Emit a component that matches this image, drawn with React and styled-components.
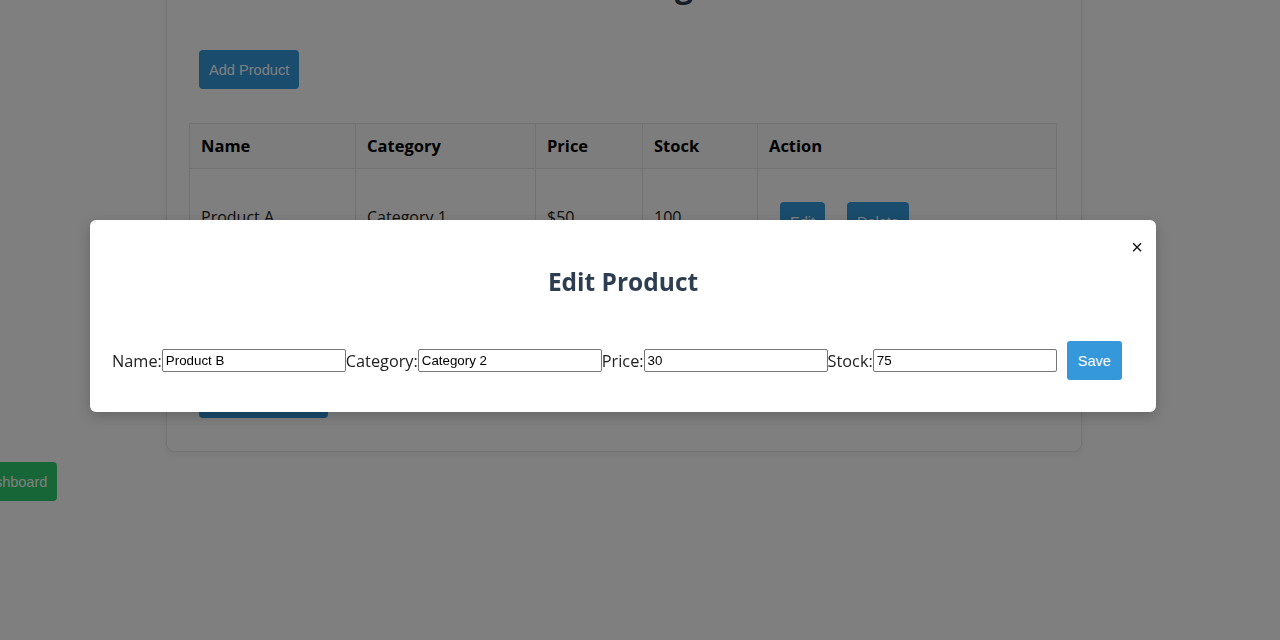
import React from "react";
import styled, { createGlobalStyle } from "styled-components";

const GlobalStyle = createGlobalStyle`
    html, body {
        margin: 0;
        padding: 0;
        background: #fff;
        font-family: "Open Sans", "Noto Sans", sans-serif;
        color: #222;
        overflow: hidden;
    }
`;

const products = [
    { name: "Product A", category: "Category 1", price: "$50", stock: 100 },
    { name: "Product B", category: "Category 2", price: "$30", stock: 75 },
];

function App() {
    return (
        <>
            <GlobalStyle />
            <Page>
                <Card>
                    <Title>Product Management</Title>
                    <Button>Add Product</Button>
                    <Table>
                        <thead>
                            <tr>
                                <Th style={{ width: 143 }}>Name</Th>
                                <Th style={{ width: 157 }}>Category</Th>
                                <Th style={{ width: 84 }}>Price</Th>
                                <Th style={{ width: 92 }}>Stock</Th>
                                <Th>Action</Th>
                            </tr>
                        </thead>
                        <tbody>
                            {products.map((p) => (
                                <tr key={p.name}>
                                    <Td>{p.name}</Td>
                                    <Td>{p.category}</Td>
                                    <Td>{p.price}</Td>
                                    <Td>{p.stock}</Td>
                                    <Td>
                                        <RowButton>Edit</RowButton>
                                        <RowButton>Delete</RowButton>
                                    </Td>
                                </tr>
                            ))}
                        </tbody>
                    </Table>
                    <Button>Generate Report</Button>
                </Card>
            </Page>
            <BackButton>Back to Dashboard</BackButton>

            <Overlay>
                <Modal>
                    <Close>×</Close>
                    <ModalTitle>Edit Product</ModalTitle>
                    <Form>
                        <Label>Name:</Label>
                        <Input defaultValue="Product B" />
                        <Label>Category:</Label>
                        <Input defaultValue="Category 2" />
                        <Label>Price:</Label>
                        <Input defaultValue="30" />
                        <Label>Stock:</Label>
                        <Input defaultValue="75" />
                        <SaveButton>Save</SaveButton>
                    </Form>
                </Modal>
            </Overlay>
        </>
    );
}

export default App;

const Page = styled.div`
    width: 1280px;
    height: 640px;
`;

const Card = styled.div`
    width: 870px;
    margin: -60px 0 0 166px;
    padding: 22px 22px 33px;
    background: #fff;
    border: 1px solid #e6e6e6;
    border-radius: 8px;
    box-shadow: 0 2px 8px rgba(0, 0, 0, 0.06);
`;

const Title = styled.h1`
    margin: 0 0 44px;
    font-size: 32px;
    font-weight: 700;
    text-align: center;
    color: #2c3e50;
    line-height: 43px;
`;

const Button = styled.button`
    display: block;
    height: 39px;
    margin: 0 10px;
    padding: 0 10px;
    border: none;
    border-radius: 4px;
    background: #3498db;
    color: #fff;
    font-family: "Liberation Sans", Arial, sans-serif;
    font-size: 14.6px;
`;

const Table = styled.table`
    width: 868px;
    margin: 34px 0 16px;
    border-collapse: collapse;
    border: 1px solid #e4e4e4;
`;

const Th = styled.th`
    padding: 10px 11px;
    line-height: 24px;
    text-align: left;
    font-size: 16.5px;
    font-weight: 700;
    color: #000;
    border: 1px solid #e4e4e4;
    background: #fafafa;
`;

const Td = styled.td`
    padding: 12px 11px;
    font-size: 16px;
    color: #222;
    vertical-align: middle;
    border: 1px solid #e4e4e4;
`;

const RowButton = styled.button`
    vertical-align: top;
    height: 39px;
    margin: 21px 11px 12px;
    padding: 0 10px;
    border: none;
    border-radius: 4px;
    background: #3498db;
    color: #fff;
    font-family: "Liberation Sans", Arial, sans-serif;
    font-size: 14.5px;
`;

const BackButton = styled.button`
    position: fixed;
    left: -86px;
    top: 462px;
    height: 39px;
    padding: 0 10px;
    border: none;
    border-radius: 4px;
    background: #2ecc71;
    color: #fff;
    font-family: "Liberation Sans", Arial, sans-serif;
    font-size: 14.5px;
`;

const Overlay = styled.div`
    position: fixed;
    inset: 0;
    display: flex;
    align-items: center;
    justify-content: center;
    padding: 0 34px 8px 0;
    background: rgba(0, 0, 0, 0.5);
`;

const Modal = styled.div`
    position: relative;
    box-sizing: border-box;
    width: 1066px;
    padding: 22px 22px 32px;
    background: #fff;
    border-radius: 6px;
    box-shadow: 0 4px 14px rgba(0, 0, 0, 0.2);
`;

const Close = styled.span`
    position: absolute;
    top: 15px;
    right: 13px;
    font-family: "Liberation Sans", Arial, sans-serif;
    font-size: 20px;
    line-height: 24px;
    color: #111;
    cursor: pointer;
`;

const ModalTitle = styled.h2`
    margin: 22px 0 0;
    font-size: 24.5px;
    font-weight: 700;
    line-height: 35px;
    text-align: center;
    color: #2c3e50;
`;

const Form = styled.div`
    display: flex;
    align-items: center;
    margin-top: 42px;
`;

const Label = styled.label`
    font-size: 16.3px;
    color: #222;
`;

const Input = styled.input`
    box-sizing: border-box;
    width: 184px;
    height: 23px;
    padding: 1px 3px;
    border: 1px solid #767676;
    border-radius: 2px;
    font-family: "Liberation Sans", Arial, sans-serif;
    font-size: 13.33px;
    color: #000;
`;

const SaveButton = styled.button`
    height: 39px;
    margin-left: 10px;
    padding: 0 11px;
    border: none;
    border-radius: 3px;
    background: #3498db;
    color: #fff;
    font-family: "Liberation Sans", Arial, sans-serif;
    font-size: 14.5px;
`;
